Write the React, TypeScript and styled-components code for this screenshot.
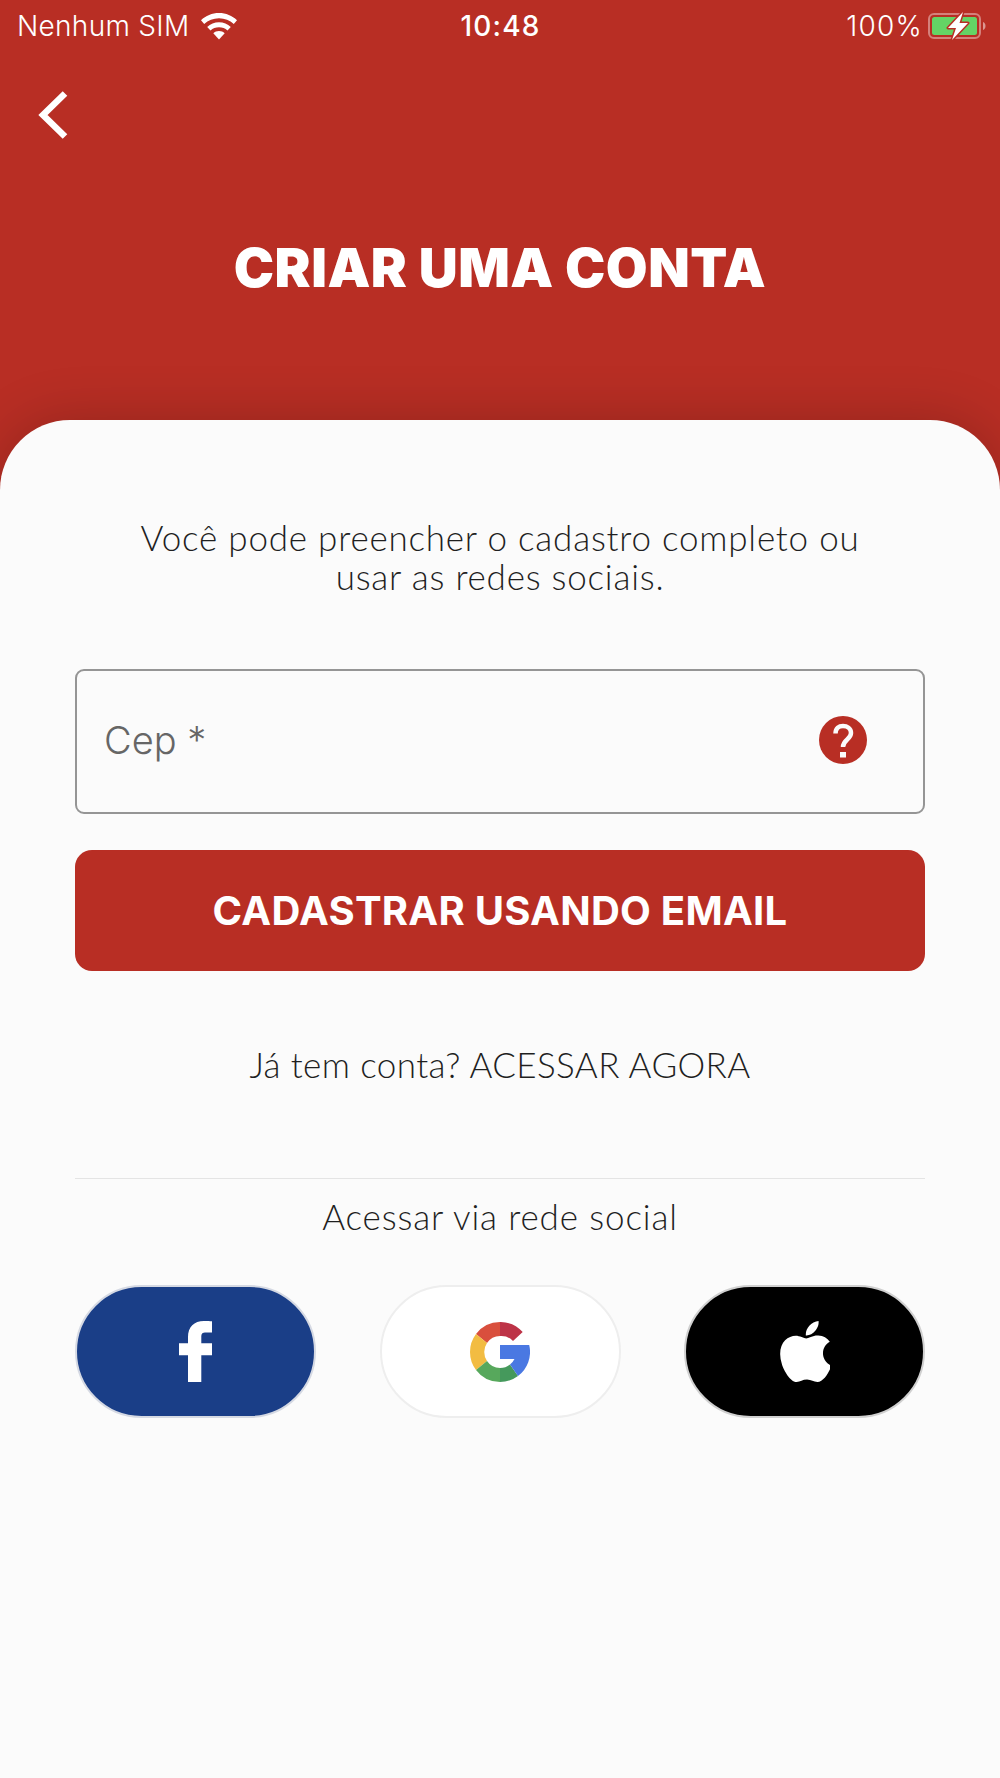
import React from 'react';
import styled, { createGlobalStyle } from 'styled-components';

const Global = createGlobalStyle`
  html, body { margin: 0; padding: 0; background: #fbfbfb; }
  * { box-sizing: border-box; }
`;

const RED = '#b82e24';
const BODY_FONT = `Lato, "Open Sans", sans-serif`;
const SYSTEM_FONT = `Inter, Roboto, sans-serif`;

const Page = styled.div`
  width: 1000px;
  height: 1778px;
  background: ${RED};
  display: flex;
  flex-direction: column;
  overflow: hidden;
`;
const Header = styled.header`
  height: 420px;
  display: flex;
  flex-direction: column;
  flex: none;
`;
const StatusBar = styled.div`
  height: 52px;
  padding: 0 12px 0 17px;
  display: grid;
  grid-template-columns: 1fr auto 1fr;
  align-items: center;
  color: #fff;
  font-family: ${SYSTEM_FONT};
  font-size: 28px;
`;
const StatusLeft = styled.div`
  display: flex;
  align-items: center;
  gap: 11px;
  font-weight: 300;
  letter-spacing: 0.3px;
`;
const StatusTime = styled.div`
  font-weight: 500;
  font-size: 28px;
  letter-spacing: 1.2px;
  margin-right: 4px;
`;
const StatusRight = styled.div`
  display: flex;
  align-items: center;
  justify-content: flex-end;
  gap: 5px;
  font-weight: 300;
  letter-spacing: 1.2px;
`;
const BackButton = styled.button`
  all: unset;
  display: block;
  margin: 38px 0 0 37px;
  width: 32px;
  height: 50px;
  flex: none;
`;
const Title = styled.h1`
  margin: 93px 0 0;
  text-align: center;
  color: #fff;
  font-family: ${SYSTEM_FONT};
  font-weight: 900;
  font-size: 54px;
  line-height: 70px;
  letter-spacing: 0.5px;
`;
const Sheet = styled.main`
  flex: 1;
  background: #fbfbfb;
  border-radius: 70px 70px 0 0;
  box-shadow: 0 0 56px rgba(0, 0, 0, 0.2);
  padding: 98px 75px 0;
  display: flex;
  flex-direction: column;
`;
const Intro = styled.p`
  margin: 0;
  text-align: center;
  color: #1f1f1f;
  font-family: ${BODY_FONT};
  font-weight: 300;
  font-size: 35px;
  line-height: 39px;
  letter-spacing: 0.78px;
`;
const Field = styled.div`
  margin-top: 73px;
  height: 145px;
  border: 2px solid #959595;
  border-radius: 9px;
  display: flex;
  align-items: center;
  justify-content: space-between;
  padding: 0 56px 4px 27px;
`;
const FieldLabel = styled.span`
  color: #666;
  font-family: ${SYSTEM_FONT};
  font-weight: 300;
  font-size: 38px;
`;
const PrimaryButton = styled.button`
  all: unset;
  box-sizing: border-box;
  margin-top: 36px;
  height: 121px;
  background: ${RED};
  border-radius: 17px;
  display: flex;
  align-items: center;
  justify-content: center;
  color: #fff;
  font-family: ${SYSTEM_FONT};
  font-weight: 700;
  font-size: 40px;
  letter-spacing: 0.25px;
`;
const LoginLine = styled.p`
  margin: 71px 0 0;
  text-align: center;
  color: #1f1f1f;
  font-family: ${BODY_FONT};
  font-weight: 300;
  font-size: 35px;
  line-height: 44px;
  letter-spacing: 0.4px;
`;
const Divider = styled.hr`
  margin: 92px 0 0;
  border: 0;
  border-top: 1px solid #e4e4e4;
`;
const SocialLabel = styled.p`
  margin: 15px 0 0;
  text-align: center;
  color: #1f1f1f;
  font-family: ${BODY_FONT};
  font-weight: 300;
  font-size: 35px;
  line-height: 44px;
  letter-spacing: 0.87px;
`;
const SocialRow = styled.div`
  margin-top: 47px;
  display: flex;
  justify-content: space-between;
`;
const SocialButton = styled.button<{ $bg: string; $ring: string }>`
  all: unset;
  box-sizing: border-box;
  width: 241px;
  height: 133px;
  border-radius: 67px;
  background: ${p => p.$bg};
  border: 2px solid ${p => p.$ring};
  display: flex;
  align-items: center;
  justify-content: center;
`;

const WifiIcon = () => (
  <svg width="36" height="27" viewBox="0 0 36 27" fill="#fff">
    <path d="M18 0C11 0 4.800 2.700 0 7.200l3.200 3.800C7.200 7.300 12.300 5.200 18 5.200s10.800 2.100 14.800 5.800L36 7.200C31.200 2.700 25 0 18 0z" />
    <path d="M18 9.200c-4.500 0-8.700 1.800-11.800 4.700l3.300 3.600c2.300-2.100 5.200-3.200 8.500-3.200s6.200 1.100 8.500 3.200l3.300-3.600C26.700 11 22.500 9.200 18 9.200z" />
    <path d="M18 18c-2.200 0-4.200.9-5.700 2.300L18 26.500l5.700-6.200C22.200 18.900 20.200 18 18 18z" />
  </svg>
);

const BatteryIcon = () => (
  <svg width="60" height="28" viewBox="0 0 60 28">
    <rect x="1" y="2" width="51" height="24" rx="5" fill="none" stroke="#fff" strokeOpacity="0.4" strokeWidth="2" />
    <rect x="4" y="5" width="45" height="18" rx="2.500" fill="#64d465" />
    <path d="M55 10c1.500.5 2.500 2 2.500 4s-1 3.500-2.500 4z" fill="#fff" fillOpacity="0.5" />
    <path d="M35 0L20 16h8l-4 12 16-17h-8.500z" fill="#fff" stroke={RED} strokeWidth="3" strokeLinejoin="round" paintOrder="stroke" />
  </svg>
);

const BackIcon = () => (
  <svg width="32" height="50" viewBox="0 0 32 50" fill="none" stroke="#fff" strokeWidth="6.500">
    <path d="M28 3.500L6 25l22 21.500" />
  </svg>
);

const HelpIcon = () => (
  <svg width="48" height="48" viewBox="-24 -24 48 48">
    <circle r="24" fill={RED} />
    <path d="M-7.500 -6.500C-7.500 -12 -4 -14 0 -14s8 2.500 8 7c0 6.500-8 6.500-8 14" fill="none" stroke="#fbfbfb" strokeWidth="4.500" />
    <rect x="-3" y="12" width="6" height="5.500" fill="#fbfbfb" />
  </svg>
);

const FacebookIcon = () => (
  <svg width="33" height="61" viewBox="0 0 33 61" fill="#fff">
    <path d="M22.300 61V34.300H33V22.300H22.300V15C22.300 12.500 24 11.500 26 11.500H33V.3C31 .1 28 0 25 0 15 0 9 6 9 16V22.300H0V34.300H9V61z" />
  </svg>
);

const GoogleIcon = () => (
  <svg width="60" height="60" viewBox="-30 -30 60 60">
    <path fill="#d94f3d" d="M0-30A30 30 0 0 0-24-18L-13-9A16 16 0 0 1 0-16z" />
    <path fill="#bd3347" d="M0-30A30 30 0 0 1 22.700-20L13-11A16 16 0 0 0 0-16z" />
    <path fill="#f2bc42" d="M-24-18A30 30 0 0 0-24 18L-13 9A16 16 0 0 1-13-9z" />
    <path fill="#57a85c" d="M-24 18A30 30 0 0 0 0 30V16A16 16 0 0 1-13 9z" />
    <path fill="#45995c" d="M0 30A30 30 0 0 0 18 24L10 12.500A16 16 0 0 1 0 16z" />
    <path fill="#4a78e2" d="M0-7H29.200A30 30 0 0 1 18 24L10 12.500A16 16 0 0 0 14.500 7H0z" />
  </svg>
);

const AppleIcon = () => (
  <svg width="50" height="61" viewBox="4 32 365 448" fill="#fff">
    <path d="M318.700 268.700c-.2-36.700 16.400-64.400 50-84.800-18.800-26.900-47.200-41.700-84.700-44.600-35.500-2.800-74.300 20.700-88.500 20.700-15 0-49.400-19.700-76.400-19.700C63.300 141.200 4 184.800 4 273.500q0 39.300 14.400 81.200c12.800 36.700 59 126.700 107.200 125.200 25.200-.6 43-17.900 75.800-17.900 31.800 0 48.300 17.900 76.400 17.900 48.600-.7 90.400-82.500 102.600-119.300-65.200-30.700-61.700-90-61.700-91.900zm-56.600-164.200c27.300-32.400 24.800-61.900 24-72.500-24.100 1.400-52 16.400-67.900 34.900-17.500 19.800-27.800 44.300-25.600 71.900 26.100 2 49.900-11.400 69.500-34.300z" />
  </svg>
);

export default function App() {
  return (
    <Page>
      <Global />
      <Header>
        <StatusBar>
          <StatusLeft>
            <span>Nenhum SIM</span>
            <WifiIcon />
          </StatusLeft>
          <StatusTime>10:48</StatusTime>
          <StatusRight>
            <span>100%</span>
            <BatteryIcon />
          </StatusRight>
        </StatusBar>
        <BackButton aria-label="Voltar">
          <BackIcon />
        </BackButton>
        <Title>CRIAR UMA CONTA</Title>
      </Header>
      <Sheet>
        <Intro>
          Você pode preencher o cadastro completo ou
          <br />
          usar as redes sociais.
        </Intro>
        <Field>
          <FieldLabel>Cep *</FieldLabel>
          <HelpIcon />
        </Field>
        <PrimaryButton>CADASTRAR USANDO EMAIL</PrimaryButton>
        <LoginLine>Já tem conta? ACESSAR AGORA</LoginLine>
        <Divider />
        <SocialLabel>Acessar via rede social</SocialLabel>
        <SocialRow>
          <SocialButton $bg="#1a3e87" $ring="#d5d9e3" aria-label="Facebook">
            <FacebookIcon />
          </SocialButton>
          <SocialButton $bg="#ffffff" $ring="#eeeeee" aria-label="Google">
            <GoogleIcon />
          </SocialButton>
          <SocialButton $bg="#000000" $ring="#d0d0d0" aria-label="Apple">
            <AppleIcon />
          </SocialButton>
        </SocialRow>
      </Sheet>
    </Page>
  );
}
